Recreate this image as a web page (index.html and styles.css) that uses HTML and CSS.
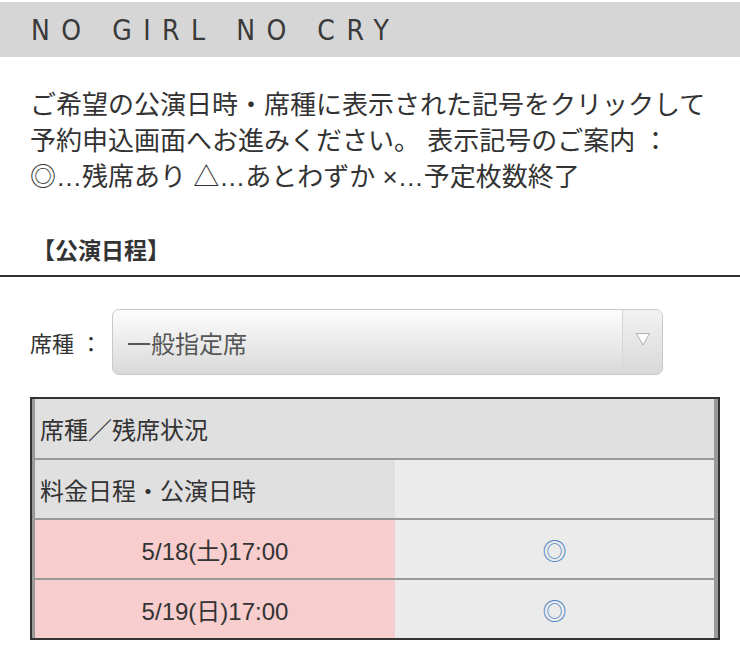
FILE: index.html
```html
<!DOCTYPE html>
<html lang="ja">
<head>
<meta charset="utf-8">
<title>NO GIRL NO CRY</title>
<link rel="stylesheet" href="styles.css">
</head>
<body>
<header class="site-header">
  <h1 class="site-title">NO GIRL NO CRY</h1>
</header>
<main>
  <div class="schedule-head">
    <p class="intro">ご希望の公演日時・席種に表示された記号をクリックして予約申込画面へお進みください。 表示記号のご案内 ：<br>◎…残席あり △…あとわずか ×…予定枚数終了</p>
    <h2 class="section-title">【公演日程】</h2>
  </div>
  <div class="seat-row">
    <span class="seat-label">席種 ：</span>
    <div class="select-box">
      <span class="select-value">一般指定席</span>
      <span class="select-arrow">
        <svg width="16" height="15" viewBox="0 0 16 15"><polygon points="1.5,1.5 14.5,1.5 8,13" fill="#ffffff" stroke="#b0b0b0" stroke-width="1" stroke-linejoin="round"/></svg>
      </span>
    </div>
  </div>
  <div class="sched-wrap">
    <div class="sched">
      <div class="cell head span2">席種／残席状況</div>
      <div class="cell head">料金日程・公演日時</div>
      <div class="cell blank"></div>
      <div class="cell date">5/18(土)17:00</div>
      <div class="cell mark"><a class="mark-link">◎</a></div>
      <div class="cell date">5/19(日)17:00</div>
      <div class="cell mark"><a class="mark-link">◎</a></div>
    </div>
  </div>
</main>
</body>
</html>
```
FILE: styles.css
```css
html, body {
  margin: 0;
  padding: 0;
  background: #ffffff;
}
body {
  width: 740px;
  color: #333333;
  font-family: "Liberation Sans", "Noto Sans CJK JP", sans-serif;
}
.site-header {
  margin-top: 2px;
  height: 55px;
  background: #d6d6d6;
  display: flex;
  align-items: center;
  padding: 3px 0 0 31px;
  box-sizing: border-box;
}
.site-title {
  margin: 0;
  font-family: "Liberation Sans Narrow", "DejaVu Sans Condensed", "Liberation Sans", sans-serif;
  font-weight: normal;
  font-size: 28px;
  letter-spacing: 11.5px;
  color: #3a3a3a;
  line-height: 1;
}
.schedule-head {
  border-bottom: 2px solid #333333;
  padding: 30px 0 9px 30px;
}
.intro {
  margin: 0;
  width: 690px;
  font-family: "Liberation Sans", "Noto Sans CJK JP", sans-serif;
  font-size: 26px;
  line-height: 36px;
  color: #333333;
}
.section-title {
  margin: 41px 0 0 2px;
  font-size: 23px;
  line-height: 30px;
  font-weight: bold;
  color: #333333;
}
.seat-row {
  display: flex;
  align-items: center;
  padding: 32px 0 0 30px;
}
.seat-label {
  width: 82px;
  font-size: 22px;
  color: #333333;
}
.select-box {
  width: 551px;
  height: 66px;
  box-sizing: border-box;
  border: 1px solid #c8c8c8;
  border-radius: 7px;
  background: linear-gradient(#fdfdfd, #d9d9d9);
  display: flex;
  align-items: stretch;
  overflow: hidden;
}
.select-value {
  flex: 1;
  display: flex;
  align-items: center;
  padding-left: 14px;
  font-size: 24px;
  color: #555555;
}
.select-arrow {
  width: 40px;
  border-left: 1px solid #d6d6d6;
  background: linear-gradient(#f2f2f2, #d9d9d9);
  display: flex;
  align-items: center;
  justify-content: center;
  padding-bottom: 5px;
  box-sizing: border-box;
}
.sched-wrap {
  margin: 22px 0 0 30px;
  width: 690px;
  box-sizing: border-box;
  border: 2px solid #333333;
}
.sched {
  display: grid;
  grid-template-columns: 360px 1fr;
  grid-template-rows: 59px;
  grid-auto-rows: 58px;
  row-gap: 2px;
  background: #999999;
  border-left: 3px solid #999999;
  border-right: 4px solid #999999;
}
.cell {
  display: flex;
  align-items: center;
  font-size: 24px;
  color: #333333;
}
.head {
  background: #e0e0e0;
  padding-left: 5px;
}
.span2 {
  grid-column: 1 / span 2;
}
.blank {
  background: #ebebeb;
}
.date {
  background: #f7cdcd;
  justify-content: center;
}
.mark {
  background: #ebebeb;
  justify-content: center;
}
.mark-link {
  font-family: "Noto Sans CJK JP", sans-serif;
  color: #4f86c8;
  font-size: 24px;
  text-decoration: none;
}
```
